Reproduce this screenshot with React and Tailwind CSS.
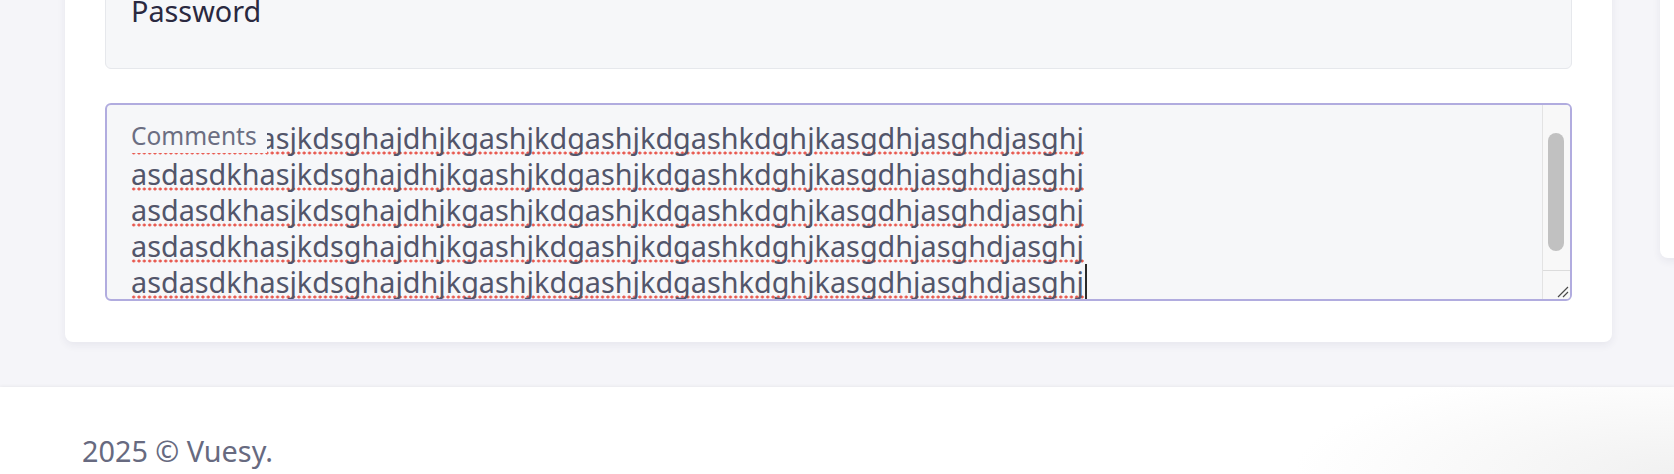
const LINE = "asdasdkhasjkdsghajdhjkgashjkdgashjkdgashkdghjkasgdhjasghdjasghj";

// one row of the textarea, with the red spell-check dots under it
function Row({ last }) {
  return (
    <div className="whitespace-nowrap">
      <span className="bg-[radial-gradient(circle,#e8594f_1.25px,transparent_1.8px)] bg-[length:5.33px_4px] bg-[position:left_0_bottom_1.8px] bg-repeat-x">
        {LINE}
      </span>
      {last && <span className="ml-[1px] inline-block h-[37px] w-[1.5px] bg-[#2a2a2a] align-top" />}
    </div>
  );
}

function CommentsBox() {
  return (
    <div className="relative mt-[34px] h-[198px] overflow-hidden rounded-md border-2 border-[#b1acdf] bg-[#f6f7f9]">
      <div className="pl-[24px] pt-[15px] text-[28.8px] leading-[36px] text-[#52556a]">
        {[0, 1, 2, 3, 4].map((i) => (
          <Row key={i} last={i === 4} />
        ))}
      </div>

      <label className="absolute left-[12px] top-0 h-[48px] w-[148px] bg-[#f6f7f9] pl-[12px] pt-[16px] text-[24.5px] leading-[30px] text-[#6b6e82]">
        Comments
      </label>

      {/* scrollbar + resize corner */}
      <div className="absolute bottom-0 right-0 top-0 w-[28px] border-l border-[#e3e3e3] bg-[#f8f8f8]">
        <div className="ml-[5px] mt-[28px] h-[118px] w-[16px] rounded-full bg-[#c1c1c1]" />
        <div className="absolute bottom-0 left-0 h-[29px] w-[27px] border-t border-[#dcdcdc]">
          <svg className="absolute bottom-[1px] right-[1px] h-[13px] w-[13px]" viewBox="0 0 13 13">
            <path d="M12 2 L2 12 M12 7 L7 12" stroke="#4a4a4a" strokeWidth="1.2" fill="none" />
          </svg>
        </div>
      </div>
    </div>
  );
}

export default function App() {
  return (
    <div className="flex h-[474px] w-full flex-col overflow-hidden bg-[#f5f5f9] font-['Noto_Sans',sans-serif]">
      <div className="-mt-[81px] flex items-start gap-[48px] pl-[65px]">
        <div className="w-[1547px] shrink-0 rounded-lg bg-white px-[40px] pb-[41px] pt-[40px] shadow-[0_3px_8px_rgba(40,40,80,0.07)]">
          <div className="h-[110px] rounded-md border border-[#e6e8ec] bg-[#f6f7f9] px-[25px] pt-[30px] text-[28.8px] leading-[42px] text-[#2a2940]">
            Password
          </div>
          <CommentsBox />
        </div>
        <div className="h-[339px] w-[300px] shrink-0 rounded-lg bg-white shadow-[0_3px_8px_rgba(40,40,80,0.07)]" />
      </div>

      <footer className="mt-[45px] flex-1 bg-white bg-[radial-gradient(380px_110px_at_right_bottom,#f1f1f1,#ffffff)] pl-[82px] pt-[43px] text-[28.8px] leading-[42px] text-[#676a80] shadow-[0_-1px_3px_rgba(0,0,0,0.05)]">
        2025 © Vuesy.
      </footer>
    </div>
  );
}
